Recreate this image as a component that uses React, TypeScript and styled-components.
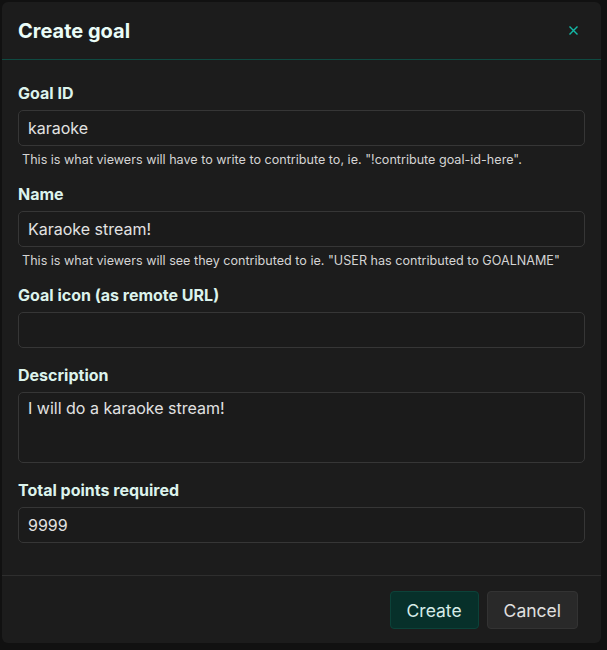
import React, { FC } from 'react';
import styled, { createGlobalStyle } from 'styled-components';

const GlobalStyle = createGlobalStyle`
  html, body {
    margin: 0;
    padding: 0;
    background: #111111;
    font-family: Inter, "Noto Sans", "Liberation Sans", sans-serif;
  }
`;

const Backdrop = styled.div`
  width: 607px;
  height: 650px;
  padding: 2px 6px 6px 2px;
  box-sizing: border-box;
  background: #111111;
`;

const Modal = styled.div`
  width: 599px;
  background: #1c1c1c;
  border-radius: 6px;
  display: flex;
  flex-direction: column;
`;

const Header = styled.div`
  height: 57px;
  display: flex;
  align-items: center;
  justify-content: space-between;
  padding: 0 22px 0 16px;
  border-bottom: 1px solid #0f4a42;
`;

const Title = styled.h2`
  margin: 0;
  font-size: 20px;
  font-weight: 700;
  color: #eafcf7;
`;

const CloseButton = styled.button`
  background: none;
  border: none;
  padding: 0;
  width: 12px;
  height: 12px;
  display: flex;
  align-items: center;
  justify-content: center;
  cursor: pointer;
`;

const Body = styled.div`
  padding: 21px 16px 32px 16px;
  display: flex;
  flex-direction: column;
  gap: 15px;
  border-bottom: 1px solid #2e2e2e;
`;

const Field = styled.div`
  display: flex;
  flex-direction: column;
`;

const Label = styled.label`
  font-size: 16px;
  line-height: 24px;
  font-weight: 700;
  color: #dcf3ec;
  margin-bottom: 5px;
`;

const Input = styled.input`
  display: block;
  box-sizing: border-box;
  width: 100%;
  height: 36px;
  background: #1b1b1b;
  border: 1px solid #363636;
  border-radius: 5px;
  padding: 0 9px;
  font-family: inherit;
  font-size: 16px;
  color: #e2e2e2;
  outline: none;
`;

const TextArea = styled.textarea`
  display: block;
  box-sizing: border-box;
  width: 100%;
  height: 71px;
  background: #1b1b1b;
  border: 1px solid #363636;
  border-radius: 5px;
  padding: 5px 9px;
  font-family: inherit;
  font-size: 16px;
  line-height: 20px;
  color: #e2e2e2;
  resize: none;
  outline: none;
`;

const Help = styled.div`
  margin-top: 7px;
  padding-left: 4px;
  font-size: 12.6px;
  line-height: 14px;
  color: #d4d4d4;
`;

const Footer = styled.div`
  display: flex;
  justify-content: flex-end;
  gap: 8px;
  padding: 15px 23px 14px 16px;
`;

const Button = styled.button<{ $primary?: boolean }>`
  height: 38px;
  padding: 0 16px;
  border-radius: 4px;
  font-family: inherit;
  font-size: 17.5px;
  cursor: pointer;
  color: ${p => (p.$primary ? '#d6ece8' : '#e0e0e0')};
  background: ${p => (p.$primary ? '#07302a' : '#292929')};
  border: 1px solid ${p => (p.$primary ? '#0c4239' : '#333333')};
`;

const CloseIcon: FC = () => (
  <svg width="9" height="9" viewBox="0 0 9 9">
    <path d="M1 1 L8 8 M8 1 L1 8" stroke="#14b8a6" strokeWidth="1.4" strokeLinecap="square" />
  </svg>
);

const App: FC = () => {
  return (
    <>
      <GlobalStyle />
      <Backdrop>
        <Modal>
          <Header>
            <Title>Create goal</Title>
            <CloseButton aria-label="Close">
              <CloseIcon />
            </CloseButton>
          </Header>

          <Body>
            <Field>
              <Label>Goal ID</Label>
              <Input defaultValue="karaoke" />
              <Help>This is what viewers will have to write to contribute to, ie. "!contribute goal-id-here".</Help>
            </Field>

            <Field>
              <Label>Name</Label>
              <Input defaultValue="Karaoke stream!" />
              <Help>This is what viewers will see they contributed to ie. "USER has contributed to GOALNAME"</Help>
            </Field>

            <Field>
              <Label>Goal icon (as remote URL)</Label>
              <Input defaultValue="" />
            </Field>

            <Field>
              <Label>Description</Label>
              <TextArea defaultValue="I will do a karaoke stream!" />
            </Field>

            <Field>
              <Label>Total points required</Label>
              <Input defaultValue="9999" />
            </Field>
          </Body>

          <Footer>
            <Button $primary>Create</Button>
            <Button>Cancel</Button>
          </Footer>
        </Modal>
      </Backdrop>
    </>
  );
};

export default App;
